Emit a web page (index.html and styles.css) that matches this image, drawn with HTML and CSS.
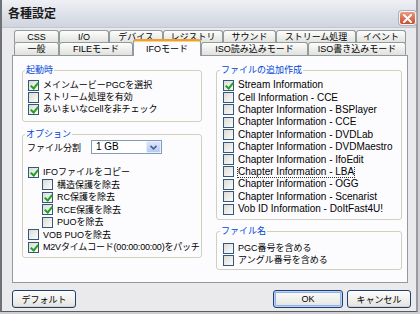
FILE: index.html
```html
<!DOCTYPE html>
<html lang="ja">
<head>
<meta charset="utf-8">
<title>各種設定</title>
<link rel="stylesheet" href="styles.css">
</head>
<body>
<div class="win">
  <div class="titlebar">
    <span class="title">各種設定</span>
    <span class="close"><svg width="9" height="9" viewBox="0 0 9 9"><path d="M1 1L8 8M8 1L1 8" stroke="#fff" stroke-width="2" stroke-linecap="round"/></svg></span>
  </div>
  <div class="main">
    <div class="tabs">
      <div class="tabrow r1">
        <div class="tab w45">CSS</div>
        <div class="tab w50">I/O</div>
        <div class="tab w54">デバイス</div>
        <div class="tab w60">レジストリ</div>
        <div class="tab w53">サウンド</div>
        <div class="tab w80">ストリーム処理</div>
        <div class="tab w50">イベント</div>
      </div>
      <div class="tabrow r2">
        <div class="tab w45">一般</div>
        <div class="tab w74">FILEモード</div>
        <div class="tab w68 sel">IFOモード</div>
        <div class="tab w107">ISO読み込みモード</div>
        <div class="tab w98">ISO書き込みモード</div>
      </div>
    </div>
    <div class="panel">
      <div class="col left">
        <fieldset class="grp g-start">
          <legend>起動時</legend>
          <div class="cb"><span class="box on"></span>メインムービーPGCを選択</div>
          <div class="cb"><span class="box"></span>ストリーム処理を有効</div>
          <div class="cb"><span class="box on"></span>あいまいなCellを非チェック</div>
        </fieldset>
        <fieldset class="grp g-opt">
          <legend>オプション</legend>
          <div class="selrow">
            <span class="sel-label">ファイル分割</span>
            <span class="select"><span class="sel-text">1 GB</span><span class="sel-btn"><svg width="7" height="5" viewBox="0 0 7 5"><path d="M0.5 0.8L3.5 3.8L6.5 0.8" fill="none" stroke="#4d6185" stroke-width="1.6"/></svg></span></span>
          </div>
          <div class="cb r"><span class="box on"></span>IFOファイルをコピー</div>
          <div class="cb r ind"><span class="box"></span>構造保護を除去</div>
          <div class="cb r ind"><span class="box on"></span>RC保護を除去</div>
          <div class="cb r ind"><span class="box on"></span>RCE保護を除去</div>
          <div class="cb r ind"><span class="box"></span>PUOを除去</div>
          <div class="cb r"><span class="box"></span>VOB PUOを除去</div>
          <div class="cb r tight"><span class="box on"></span>M2Vタイムコード(00:00:00:00)をパッチ</div>
        </fieldset>
      </div>
      <div class="col right">
        <fieldset class="grp g-add">
          <legend>ファイルの追加作成</legend>
          <div class="cb q"><span class="box on"></span>Stream Information</div>
          <div class="cb q"><span class="box"></span>Cell Information - CCE</div>
          <div class="cb q"><span class="box"></span>Chapter Information - BSPlayer</div>
          <div class="cb q"><span class="box"></span>Chapter Information - CCE</div>
          <div class="cb q"><span class="box"></span>Chapter Information - DVDLab</div>
          <div class="cb q"><span class="box"></span>Chapter Information - DVDMaestro</div>
          <div class="cb q"><span class="box"></span>Chapter Information - IfoEdit</div>
          <div class="cb q"><span class="box"></span><span class="focus">Chapter Information - LBA</span></div>
          <div class="cb q"><span class="box"></span>Chapter Information - OGG</div>
          <div class="cb q"><span class="box"></span>Chapter Information - Scenarist</div>
          <div class="cb q"><span class="box"></span>Vob ID Information - DoItFast4U!</div>
        </fieldset>
        <fieldset class="grp g-name">
          <legend>ファイル名</legend>
          <div class="cb"><span class="box"></span>PGC番号を含める</div>
          <div class="cb"><span class="box"></span>アングル番号を含める</div>
        </fieldset>
      </div>
    </div>
    <div class="btns">
      <button class="btn b-def">デフォルト</button>
      <span class="spacer"></span>
      <button class="btn b-ok">OK</button>
      <button class="btn b-cancel">キャンセル</button>
    </div>
  </div>
</div>
</body>
</html>
```
FILE: styles.css
```css
* { box-sizing: border-box; }
html, body { margin: 0; padding: 0; }
body {
  background: #cfcfd3;
  font-family: "Liberation Sans", "Noto Sans CJK JP", sans-serif;
  font-size: 9px;
  color: #000;
  width: 420px;
  height: 314px;
  overflow: hidden;
}
.win {
  width: 418px;
  height: 312px;
  background: #eaeaed;
  border-left: 2px solid #707078;
  border-right: 2px solid #9a9aa2;
  border-bottom: 1px solid #5a5a60;
  display: flex;
  flex-direction: column;
}
.titlebar {
  height: 28px;
  flex: none;
  background: linear-gradient(#eef0f5, #cfd4de);
  border-bottom: 1px solid #c2c6ce;
  display: flex;
  justify-content: space-between;
  align-items: flex-start;
  padding: 6px 0 0 6px;
}
.title {
  font-family: "Noto Sans CJK JP", sans-serif;
  font-weight: bold;
  font-size: 12px;
  line-height: 13px;
  color: #1a1a1a;
}
.close {
  width: 17px;
  height: 14px;
  margin-top: 5px;
  border-radius: 3px;
  border: 1px solid #f4f4f4;
  background: linear-gradient(#ec9a80, #cd4a2e);
  display: flex;
  align-items: center;
  justify-content: center;
  box-shadow: 0 0 0 1px #b0b0b8;
}
.main {
  flex: 1;
  display: flex;
  flex-direction: column;
  padding: 2px 8px 0 10px;
}
.tabs { display: flex; flex-direction: column; }
.tabrow { display: flex; padding-left: 2px; }
.r1 { height: 12px; align-items: stretch; }
.r2 { height: 13px; align-items: flex-end; }
.tab {
  border: 1px solid #919b9c;
  border-bottom: none;
  border-radius: 3px 3px 0 0;
  background: linear-gradient(#fdfdfd, #e0e0dc);
  display: flex;
  align-items: center;
  justify-content: center;
  line-height: 1;
  font-size: 9px;
  white-space: nowrap;
  flex: none;
}
.r1 .tab { height: 13px; }
.r2 .tab { height: 13px; }
.w45 { width: 45px; }
.w50 { width: 50px; }
.w54 { width: 54px; }
.w60 { width: 60px; }
.w53 { width: 53px; }
.w80 { width: 80px; }
.w74 { width: 74px; }
.w68 { width: 68px; }
.w107 { width: 107px; }
.w98 { width: 98px; }
.r2 .tab.sel {
  height: 17px;
  margin-bottom: -1px;
  position: relative;
  z-index: 1;
  background: #fcfcfe;
  border-top: 2px solid #e8a03c;
  box-shadow: inset 0 1px 0 #ffd36a;
  padding-top: 1px;
}
.panel {
  height: 228px;
  flex: none;
  border: 1px solid #919b9c;
  background: #fcfcfe;
  display: flex;
  gap: 14px;
  padding: 8px 5px 0 9px;
}
.col { display: flex; flex-direction: column; }
.left { width: 180px; }
.right { width: 186px; }
.grp {
  margin: 0;
  min-width: 0;
  border: 1px solid #d0d0bf;
  border-radius: 3px;
  padding: 3px 0 6px 5px;
}
legend {
  padding: 0 1px;
  margin-left: -3px;
  color: #0046d5;
  font-size: 9px;
  line-height: 12px;
}
.cb {
  display: flex;
  align-items: center;
  height: 12px;
  white-space: nowrap;
  overflow: hidden;
  line-height: 12px;
}
.cb.r { height: 12.5px; }
.cb.q { height: 12.4px; font-size: 10px; }
.cb.ind { padding-left: 14px; }
.cb.tight { letter-spacing: -0.2px; overflow: visible; }
.box {
  width: 11px;
  height: 11px;
  flex: none;
  border: 1px solid #34577e;
  background: linear-gradient(135deg, #dcdcd6, #fbfbf9);
  margin-right: 4px;
  position: relative;
}
.box.on::after {
  content: "";
  position: absolute;
  left: 3px;
  top: 0;
  width: 3px;
  height: 6px;
  border: solid #21a121;
  border-width: 0 2px 2px 0;
  transform: rotate(40deg);
}
.focus { outline: 1px dotted #333; outline-offset: 0; line-height: 11px; }
.g-opt { margin-top: 6px; padding: 0 0 3px 5px; }
.selrow {
  display: flex;
  align-items: center;
  height: 14px;
  margin-bottom: 12px;
}
.sel-label { width: 64px; margin-left: -1px; }
.select {
  width: 71px;
  height: 14px;
  border: 1px solid #7f9db9;
  background: #fff;
  display: flex;
}
.sel-text { flex: 1; padding-left: 4px; line-height: 12px; font-size: 10px; }
.sel-btn {
  width: 15px;
  border: 1px solid #e6eefc;
  border-radius: 2px;
  background: linear-gradient(#dce6fb, #b5c9f3);
  display: flex;
  align-items: center;
  justify-content: center;
}
.g-add { padding: 3px 0 4px 6px; }
.g-name { margin-top: 5px; padding: 5px 0 3px 6px; }
.btns {
  display: flex;
  margin-top: 7px;
  margin-right: -3px;
  height: 18px;
  gap: 4px;
}
.spacer { flex: 1; }
.btn {
  font-family: "Liberation Sans", "Noto Sans CJK JP", sans-serif;
  font-size: 9px;
  color: #000;
  height: 18px;
  padding: 0;
  border: 1px solid #1f3f6e;
  border-radius: 3px;
  background: linear-gradient(#fdfdfd, #e4e4de);
  box-shadow: inset 0 -1px 0 #d6d0c5;
}
.b-def { width: 64px; }
.b-ok { width: 70px; box-shadow: inset 0 0 0 1px #bcd3f5, inset 0 0 0 2px #8fb0ea; }
.b-cancel { width: 64px; }
```
